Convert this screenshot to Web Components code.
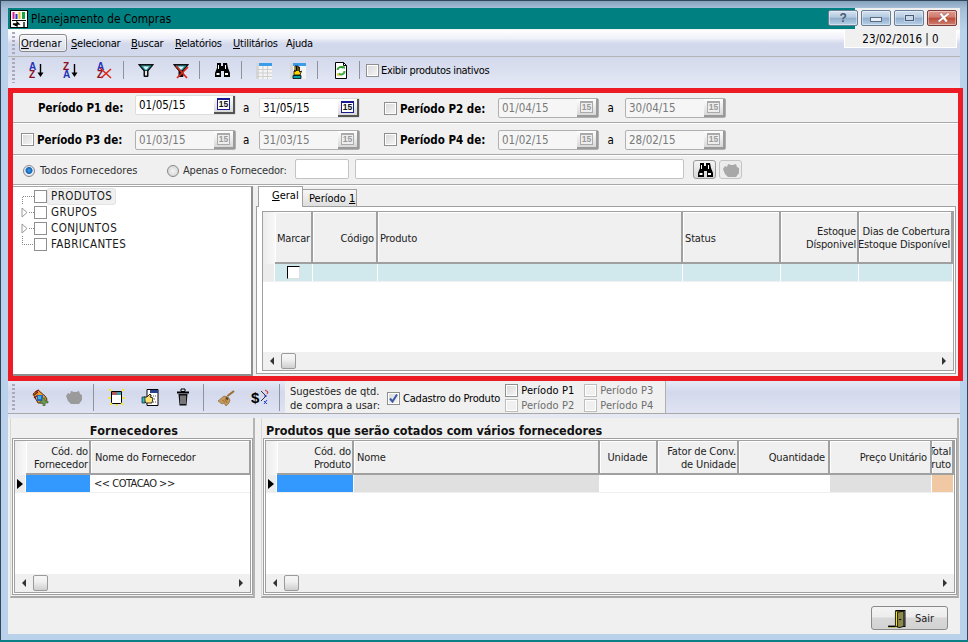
<!DOCTYPE html>
<html lang="pt"><head><meta charset="utf-8"><title>Planejamento de Compras</title>
<style>
html,body{margin:0;padding:0;width:968px;height:642px;overflow:hidden;background:#b9d1ea}
body{font:11px "DejaVu Sans Condensed","DejaVu Sans",sans-serif;letter-spacing:-.15px;color:#000}
</style></head><body>
<app-window>
  <title-bar>Planejamento de Compras</title-bar>
  <menu-bar date="23/02/2016 | 0"></menu-bar>
  <tool-bar h="31" pb="5" style="--top:#d3d9ec;--mid:#d9deef;--bot:#e6eaf6">
    <x-icon n="az" style="margin-left:13px"></x-icon><x-icon n="za" style="margin-left:16px"></x-icon><x-icon n="azx" style="margin-left:16px"></x-icon>
    <tool-sep style="margin-left:9px"></tool-sep>
    <x-icon n="filter" style="margin-left:13px"></x-icon><x-icon n="filterx" style="margin-left:17px"></x-icon>
    <tool-sep style="margin-left:9px"></tool-sep>
    <x-icon n="bin" style="margin-left:13px"></x-icon>
    <tool-sep style="margin-left:10px"></tool-sep>
    <x-icon n="grid" style="margin-left:13px"></x-icon><x-icon n="gridhand" style="margin-left:16px"></x-icon>
    <tool-sep style="margin-left:10px"></tool-sep>
    <x-icon n="refresh" style="margin-left:14px"></x-icon>
    <tool-sep style="margin-left:9px"></tool-sep>
    <check-field style="margin-left:6px;letter-spacing:-.36px;--cg:2px">Exibir produtos inativos</check-field>
  </tool-bar>
  <red-frame>
    <period-row h="30" top="5">
      <span slot="a" style="padding-left:25px;font-weight:700;font-size:11.5px;letter-spacing:0">Período P1 de:</span>
      <date-field slot="d1" value="01/05/15" style="margin-top:-3px"></date-field>
      <date-field slot="d2" value="31/05/15"></date-field>
      <check-field slot="b" strong style="margin-top:4px">Período P2 de:</check-field>
      <date-field slot="d3" value="01/04/15" disabled></date-field>
      <date-field slot="d4" value="30/04/15" disabled></date-field>
    </period-row>
    <period-row h="32" top="7">
      <check-field slot="a" strong style="margin:3px 0 0 8px">Período P3 de:</check-field>
      <date-field slot="d1" value="01/03/15" disabled></date-field>
      <date-field slot="d2" value="31/03/15" disabled></date-field>
      <check-field slot="b" strong style="margin-top:3px">Período P4 de:</check-field>
      <date-field slot="d3" value="01/02/15" disabled></date-field>
      <date-field slot="d4" value="28/02/15" disabled></date-field>
    </period-row>
    <supplier-row></supplier-row>
    <split-pane>
      <tree-view slot="left">
        <tree-item kind="first" hover>PRODUTOS</tree-item>
        <tree-item kind="node">GRUPOS</tree-item>
        <tree-item kind="node">CONJUNTOS</tree-item>
        <tree-item kind="last">FABRICANTES</tree-item>
      </tree-view>
      <tab-panel slot="right">
        <data-grid hh="51" style="--pt:2px" data-cols='[[12,"ind",""],[38,"r","Marcar"],[65,"r","Código",2],[305,"l","Produto"],[98,"l","Status"],[78,"r","Estoque|Dísponivel"],[94,"r","Dias de Cobertura|Estoque Disponível"]]' data-row="#d1e8ec" data-mark="1"></data-grid>
      </tab-panel>
    </split-pane>
  </red-frame>
  <tool-bar h="32" foot style="--top:#e6eaf6;--mid:#d3d9ec;--bot:#dfe3f2">
    <x-icon n="house" style="margin-left:16px"></x-icon><x-icon n="blob" style="margin-left:16px"></x-icon>
    <tool-sep tall style="margin-left:10px"></tool-sep>
    <x-icon n="newdoc" style="margin-left:13px"></x-icon><x-icon n="dochand" style="margin-left:16px"></x-icon><x-icon n="trash" style="margin-left:15px"></x-icon>
    <tool-sep tall style="margin-left:11px"></tool-sep>
    <x-icon n="broom" style="margin-left:13px"></x-icon><x-icon n="dollar" style="margin-left:16px"></x-icon>
    <tool-sep tall style="margin-left:10px"></tool-sep>
    <suggest-box style="margin-left:5px"></suggest-box>
  </tool-bar>
  <div style="display:flex;height:180px;gap:6px;padding:0 1px 0 2px;box-sizing:border-box">
    <group-panel w="245" caption="Fornecedores" center style="letter-spacing:.2px">
      <data-grid hh="33" style="letter-spacing:-.15px;--lp:4px" data-cols='[[11,"ind",""],[65,"r","Cód. do|Fornecedor"],[160,"l","Nome do Fornecedor"]]' data-cells='["#3399ff","#fff"]' data-cell-text="&lt;&lt; COTACAO &gt;&gt;" data-text-col="2" data-arrow="1" data-both="1"></data-grid>
    </group-panel>
    <group-panel w="698" caption="Produtos que serão cotados com vários fornecedores" style="letter-spacing:-.04px">
      <data-grid hh="33" style="letter-spacing:-.15px;--lp:3px" data-cols='[[11,"ind",""],[77,"r","Cód. do|Produto"],[246,"l","Nome"],[58,"c","Unidade",4],[81,"r","Fator de Conv.|de Unidade"],[91,"r","Quantidade",3],[102,"r","Preço Unitário",3],[22,"r","Total|Bruto"]]' data-cells='["#3399ff","#e0e0e0","#fff","#fff","#fff","#e0e0e0","#f0c8a4"]' data-arrow="1"></data-grid>
    </group-panel>
  </div>
  <foot-bar></foot-bar>
</app-window>

<script>
const svg=(w,h,body)=>`<svg xmlns="http://www.w3.org/2000/svg" width="${w}" height="${h}" viewBox="0 0 18 18" style="display:block">${body}</svg>`;
const L=`font-family="Liberation Sans" font-weight="700" font-size="10" letter-spacing="0"`;
const arrowD=`<path d="M12.500 3v9" stroke="#000" stroke-width="1.400"/><path d="M9.500 11.500h6l-3 4.500z" fill="#000"/>`;
const ICONS={
az:`<text x="1" y="8.500" ${L} fill="#2432b8">A</text><text x="1" y="17" ${L} fill="#8e1020">Z</text>${arrowD}`,
za:`<text x="1" y="8.500" ${L} fill="#8e1020">Z</text><text x="1" y="17" ${L} fill="#2432b8">A</text>${arrowD}`,
azx:`<text x="1" y="8.500" ${L} fill="#2432b8">A</text><text x="1" y="17" ${L} fill="#8e1020">Z</text><path d="M4 7l11 10M15 8L5 17" stroke="#d8281c" stroke-width="1.500"/>`,
filter:`<path d="M1.500 3.500h15l-5.500 6.500v5.500h-4V10z" fill="#111" stroke="#111"/><path d="M3.500 4.500h11l-4.500 5h-2z" fill="#2a9aa5"/><path d="M6 5.500h6l-2.500 3h-1z" fill="#dff4f6"/><path d="M8 10h2v4.500H8z" fill="#e8e8e8"/>`,
filterx:`<path d="M1.500 3.500h15l-5.500 6.500v5.500h-4V10z" fill="#111" stroke="#111"/><path d="M3.500 4.500h11l-4.500 5h-2z" fill="#2a9aa5"/><path d="M6 5.500h6l-2.500 3h-1z" fill="#dff4f6"/><path d="M4 5l11 12M16 6L5 17" stroke="#d8281c" stroke-width="1.700"/>`,
bin:`<path d="M4 2h4v3h2V2h4l1 5 2 5v4h-6v-6H8v6H2v-4l2-5z" fill="#000"/><path d="M5 4h1v4H5zM12 4h1v4h-1zM3.500 12h3v2h-3zM12 12h3v2h-3z" fill="#fff"/>`,
grid:`<path d="M1 2h16v16H1z" fill="#f4f4f4"/><path d="M1 2h16v3H1z" fill="#3c9ce8"/><path d="M1 2h3v16H1z" fill="#d6d6d6"/><path d="M1 8.500h16M1 12h16M1 15.500h16M8 5v13M12.500 5v13" stroke="#cfcfcf"/>`,
gridhand:`<path d="M1 2h16v16H1z" fill="#f4f4f4"/><path d="M1 2h16v3H1z" fill="#3c9ce8"/><path d="M1 2h3v16H1z" fill="#d6d6d6"/><path d="M5 14v-4l1-1v2-6h1.500v5-5h1.500v5-4h1.500v5l2-1-1.500 4z" fill="#ffd800" stroke="#000" stroke-width=".8"/><path d="M4 14.500h8v3H4z" fill="#00a0b0" stroke="#000" stroke-width=".8"/>`,
refresh:`<path d="M3.500 1.500h8l3 3v13h-11z" fill="#fff" stroke="#000"/><path d="M11.500 1.500v3h3" fill="none" stroke="#000"/><path d="M5.500 9a3.500 3.500 0 0 1 6-2" fill="none" stroke="#2ea02e" stroke-width="2"/><path d="M12.500 10a3.500 3.500 0 0 1-6 2.500" fill="none" stroke="#3fb03f" stroke-width="2"/><path d="M10 5l3 .5-.5 3z" fill="#2ea02e"/><path d="M8 15l-3-.5.5-3z" fill="#f0c020"/>`,
house:`<path d="M2 6l5-4 7 6 2 3-2 4-7 0z" fill="#f0a020" stroke="#5a2a10"/><path d="M4 4l4-2M3 7l4-3M3 10l4-3" stroke="#801818" stroke-width="1.200"/><path d="M6 7h6v6H6z" fill="#1c64d8"/><path d="M7 8h3v3H7z" fill="#38b8e8"/><path d="M11 10h3v3h3v2h-3v3h-2v-3h-3v-2h2z" fill="#6f9a50" stroke="#3c5c30" stroke-width=".6"/>`,
blob:`<path d="M1 8l2-3 2 1 1-3 3 1 2 0 3-1 1 3 2 1v5l-3 4H6l-3-3z" fill="#9a9a9a"/>`,
newdoc:`<path d="M4.500 3.500h10v12h-10z" fill="#fff" stroke="#000"/><path d="M5 4h5v3H5z" fill="#b05a5a"/><path d="M10 4h4v3h-4z" fill="#3c9ca8"/><path d="M2 1l2 2M17 1l-2 2M1 10h3M15 10h3M3 17l2-2M16 17l-2-2M9.500 16v2" stroke="#ffe800" stroke-width="1.500"/>`,
dochand:`<path d="M6 1.500h11v16H6z" fill="#fff" stroke="#000"/><path d="M9 2h8v3H9z" fill="#28408c"/><path d="M8 8h7M9 11h6M10 14h5" stroke="#555" stroke-dasharray="1 1"/><path d="M3 9h3l3-3 1 1-1 2 3 1-1 5H5l-1-1z" fill="#ffe070" stroke="#000" stroke-width=".8"/><path d="M1 9h3v6H1z" fill="#30b8c8" stroke="#000" stroke-width=".6"/>`,
trash:`<path d="M7 1h4v2.500H7z" fill="none" stroke="#000"/><path d="M3 3.500h12v2H3z" fill="#000"/><path d="M4.500 6h9l-1 11.500h-7z" fill="#111"/><path d="M7 7.500v8.500M9 7.500v8.500M11 7.500v8.500" stroke="#ddd"/>`,
broom:`<path d="M10.500 8L17 3" stroke="#9a6a30" stroke-width="2"/><path d="M1 13l6-5 4 1 2 3-1 3-3 3-2-3-2 1z" fill="#c89a58" stroke="#7a5a30" stroke-width=".6"/><path d="M9 9.500l2 2" stroke="#5a4020" stroke-width="2"/><path d="M5 12l3 2M8 11l2 4" stroke="#7a5a30" stroke-width=".7"/>`,
dollar:`<text x="0" y="15" font-family="Liberation Sans" font-weight="700" font-size="15" letter-spacing="0" fill="#000">$</text><path d="M10 3l5 5-5 5" fill="none" stroke="#333" stroke-width="1"/><path d="M14 2l3 2-1 2" fill="none" stroke="#d02020"/><path d="M13 8l3 0" stroke="#2a40c8"/><path d="M13 13l3 3M16 12l-3 4" stroke="#2a40c8"/>`,
door:`<path d="M1 16.500h7" stroke="#000" stroke-width="1.500"/><path d="M8 1.500h9v15h-3" fill="none" stroke="#000"/><path d="M8 2h7v14.500H8z" fill="#ffe800" stroke="#000" stroke-width=".8"/><path d="M10 3l6-1v14.500l-6 1.500z" fill="#8a8a50" stroke="#000" stroke-width=".8"/><path d="M11.500 10h2" stroke="#000"/><path d="M1 18h9" stroke="#c8c850" stroke-width="2" stroke-dasharray="1 1"/>`,
app:`<path d="M0 0h18v18H0z" fill="#000"/><path d="M1 1h16v16H1z" fill="#f8f8f8"/><path d="M2.500 2h2v7h-2z" fill="#e81c8c"/><path d="M5.500 4h2v5h-2z" fill="#1c3cc8"/><path d="M8.500 2h2v7h-2z" fill="#e8c81c"/><path d="M12 2h3v7h-3z" fill="#18a048"/><path d="M2 10.500h14" stroke="#000"/><path d="M3 14h6l-2-2v4zM14 12v5" stroke="#000" stroke-width="1.300" fill="#000"/>`
};
class Base extends HTMLElement{
  connectedCallback(){ if(this.shadowRoot)return; this.attachShadow({mode:"open"}).innerHTML=this.view(); }
  view(){return ""}
}
const def=(n,f)=>customElements.define(n,class extends Base{view(){return f(this)}});

def("x-icon",e=>`<style>:host{display:block;flex:none;width:18px;height:18px}</style>${svg(18,18,ICONS[e.getAttribute("n")])}`);
def("tool-sep",e=>`<style>:host{display:block;flex:none;width:1px;height:${e.hasAttribute("tall")?27:18}px;background:#8f939c}</style>`);

def("app-window",()=>`<style>
:host{display:block;box-sizing:border-box;width:968px;height:642px;position:relative;padding:8px 8px 8px 8px;
background:linear-gradient(#7f9db9 0,#a5bdd6 8px,#b9d1ea 30px,#b9d1ea 100%);overflow:hidden;
box-shadow:inset 0 0 0 1px #34475a}
.b{display:flex;flex-direction:column;width:952px;height:626px;background:#f0f0f0}
.t{position:absolute;left:0;right:0;bottom:0;height:2px;background:#0c7f86}
</style><div class="b"><slot></slot></div><div class="t"></div>`);

def("title-bar",()=>`<style>
:host{display:block;height:22px;position:relative;flex:none}
.s{width:847px;height:21px;background:#008080;display:flex;align-items:center;gap:3px;padding-left:2px;box-sizing:border-box;font-size:11.800px;letter-spacing:0}
.btns{position:absolute;right:3px;top:2px;display:flex;gap:3px}
.c{width:30px;height:16px;box-sizing:border-box;border:1px solid #6a7f96;border-radius:2px;background:linear-gradient(#d4e2f0 0,#b4cae0 45%,#8fadcc 50%,#b8d0e6 100%);display:flex;align-items:center;justify-content:center;box-shadow:inset 0 0 0 1px #ffffff66;font:700 12px "Liberation Sans",sans-serif;color:#4a5a70}
.x{background:linear-gradient(#e09a90 0,#d07a6c 45%,#b94a38 50%,#d08070 100%);border-color:#7a3a38;color:#fff}
i{display:block}
</style><div class="s"><span style="display:block;width:18px;height:18px">${svg(18,18,ICONS.app)}</span><span><slot></slot></span></div>
<div class="btns"><div class="c">?</div><div class="c"><i style="width:10px;height:3px;margin-top:3px;background:#e8eef6;border:1px solid #5a6a80"></i></div><div class="c"><i style="width:7px;height:4px;background:#c8d8e8;border:1.500px solid #4a5a70;outline:1px solid #e8eef666"></i></div><div class="c x"><i style="display:block;line-height:10px;font-size:15px;text-shadow:0 0 1px #5a2020">✕</i></div></div>`);

def("menu-bar",e=>{
 const items=[["O","rdenar",48],["S","elecionar",56],["B","uscar",40],["R","elatórios",54],["U","tilitários",49],["","Ajuda",40]];
 return `<style>
:host{display:flex;flex:none;height:27px;box-sizing:border-box;border-bottom:1px solid #b5b5b5;position:relative;align-items:center;padding-left:4px;letter-spacing:-.25px;
background:linear-gradient(#fff 0,#eef0f9 9px,#e4e7f4 10px,#d3d9ec 14px,#d3d9ec 100%)}
.g{width:3px;height:22px;background:repeating-linear-gradient(#aab 0 2px,transparent 2px 4px);margin-right:4px}
.m{padding:0 2px;margin-right:4px;height:18px;line-height:17px;box-sizing:border-box;border:1px solid transparent;border-radius:3px;white-space:nowrap}
.on{border-color:#8a8a8a;background:linear-gradient(#f4f5f9,#d8dbe8);box-shadow:inset 0 0 0 1px #fff8;margin-right:1px;padding:0 0 0 1px;letter-spacing:0}
u{text-decoration-thickness:1px;text-underline-offset:1px}
.d{position:absolute;right:3px;top:0;width:113px;height:18px;box-sizing:border-box;background:#f0f0f0;border:1px solid #fff;border-top:0;text-align:center;line-height:18px;font-size:11.500px;letter-spacing:0}
</style><div class="g"></div>${items.map((i,n)=>`<div class="m ${n==0?'on':''}" style="width:${i[2]}px"><u>${i[0]}</u>${i[1]}</div>`).join("")}<div class="d">${e.getAttribute("date")}</div>`});

def("tool-bar",e=>{const h=+e.getAttribute("h"),foot=e.hasAttribute("foot"),pb=e.getAttribute("pb")||0;return `<style>
:host{display:block;flex:none}
.i{display:flex;align-items:center;height:${h}px;padding:0 0 ${pb}px 4px;box-sizing:border-box;background:linear-gradient(var(--top) 0,var(--mid) 35%,var(--bot) 100%)}
.g{width:3px;height:${h-6}px;flex:none;background:repeating-linear-gradient(#aab 0 2px,transparent 2px 4px)}
.f{height:5px;box-sizing:border-box;border-top:1px solid #a8a8a8;background:#e6e9f4}
</style><div class="i"><div class="g"></div><slot></slot></div>${foot?'<div class="f"></div>':''}`});

const box=(c,d,plain)=>`<span class="cb ${d?'dis':''} ${plain?'plain':''}">${c?'<svg width="11" height="11" viewBox="0 0 11 11" style="display:block"><path d="M2 5.500l2.500 3L9 1.500" fill="none" stroke="#3c5aa8" stroke-width="2"/></svg>':''}</span>`;
const boxCss=`.cb{display:block;flex:none;width:13px;height:13px;box-sizing:border-box;border:1px solid #8e8f8f;background:linear-gradient(135deg,#d8d8d8,#f6f6f6);box-shadow:inset 0 0 0 1px #fff}
.cb.dis{border-color:#bdbdbd;background:#f0f0f0}.cb.plain{background:#fff;border-color:#8e8f8f;box-shadow:none}`;
def("check-field",e=>`<style>:host{display:flex;align-items:center;gap:var(--cg,3px);height:13px;flex:none;${e.hasAttribute("strong")?"font-weight:700;font-size:11.500px;letter-spacing:0;":""}${e.hasAttribute("dim")?"color:#6d6d6d;":""}white-space:nowrap}${boxCss}</style>${box(e.hasAttribute("checked"),e.hasAttribute("dim"))}<span><slot></slot></span>`);

def("red-frame",()=>`<style>:host{display:flex;flex-direction:column;flex:none;width:955px;height:293px;box-sizing:border-box;border:5px solid #ed1c24;background:#f0f0f0;position:relative}</style><slot></slot>`);

def("period-row",e=>`<style>:host{display:grid;flex:none;height:${e.getAttribute("h")}px;box-sizing:border-box;padding-top:${e.getAttribute("top")}px;border-bottom:1px solid #a8a8a8;box-shadow:0 1px 0 #fff;grid-template-columns:122px 101px 23px 101px 24px 114px 101px 26px 101px;align-items:start;white-space:nowrap}
.a{text-align:center;line-height:20px;padding-right:3px;font-size:11.500px}
::slotted([slot=a]),::slotted([slot=b]){margin-top:2px}
.l{line-height:20px}</style>
<div class="l"><slot name="a"></slot></div><slot name="d1"></slot><div class="a">a</div><slot name="d2"></slot><div></div><div class="l"><slot name="b"></slot></div><slot name="d3"></slot><div class="a">a</div><slot name="d4"></slot>`);

def("date-field",e=>{const d=e.hasAttribute("disabled");return `<style>
:host{display:flex;width:101px;height:20px;box-sizing:border-box;border:1px solid ${d?'#b0b0b0':'#dcdcdc'};border-radius:2px;background:${d?'#f6f6f6':'#fff'};padding-left:3px;align-items:center;justify-content:space-between;color:${d?'#7a7a7a':'#000'};font-size:11.500px;letter-spacing:0}
.c{width:21px;height:18px;box-sizing:border-box;background:linear-gradient(#fff,#d8d8d8);border-right:2px solid ${d?'#9a9a9a':'#555'};border-bottom:2px solid ${d?'#9a9a9a':'#555'};display:flex;align-items:center;justify-content:center}
.n{display:block;width:13px;height:12px;box-sizing:border-box;border:1px solid ${d?'#aaa':'#1a1a90'};border-top-width:2px;background:${d?'#eee':'#fff'};font:700 8.500px/9px "Liberation Sans",sans-serif;color:${d?'#999':'#111'};text-align:center;letter-spacing:0}
</style><span>${e.getAttribute("value")}</span><span class="c"><span class="n">15</span></span>`});

def("supplier-row",()=>`<style>
:host{display:flex;flex:none;align-items:center;height:30px;box-sizing:border-box;border-bottom:1px solid #a8a8a8;box-shadow:0 1px 0 #fff;padding:0 0 1px 10px;white-space:nowrap;letter-spacing:0}
.r{display:block;flex:none;width:12px;height:12px;box-sizing:border-box;border-radius:50%;border:1px solid #888;background:radial-gradient(circle,#f4f4f4,#cfcfcf);margin-top:3px}
.r.on{background:radial-gradient(circle at 50% 45%,#3aa0f0 0,#1464b0 3px,#eef 4px,#ddd 6px)}
.x{margin-top:3px;color:#333}
.t{display:block;height:20px;box-sizing:border-box;border:1px solid #c4c4c4;border-radius:2px;background:#fff}
.b{display:flex;align-items:center;justify-content:center;width:23px;height:19px;box-sizing:border-box;border:1px solid #9a9a9a;border-radius:3px;background:linear-gradient(#f4f4f4,#d8d8d8);margin-top:1px}
</style><span class="r on"></span><span class="x" style="margin-left:5px;width:127px">Todos Fornecedores</span><span class="r"></span><span class="x" style="margin-left:4px;width:112px;letter-spacing:-.2px">Apenas o Fornecedor:</span>
<span class="t" style="width:54px;margin-right:6px"></span><span class="t" style="width:329px;margin-right:9px"></span>
<span class="b">${svg(18,18,ICONS.bin)}</span><span class="b" style="margin-left:3px;border-color:#c4c4c4;background:#ececec">${svg(18,18,ICONS.blob.replace('#9a9a9a','#a8a8a8'))}</span>`);

def("split-pane",()=>`<style>:host{display:flex;flex:1;min-height:0}</style><slot name="left"></slot><slot name="right"></slot>`);
def("tree-view",()=>`<style>:host{display:block;box-sizing:border-box;width:240px;height:190px;margin-top:1px;background:#fff;border-top:1px solid #a8a8a8;border-right:2px solid #8f8f8f;border-bottom:2px solid #8f8f8f;padding:1px 0 0 7px}</style><slot></slot>`);
def("tree-item",e=>{const k=e.getAttribute("kind");
 const dots=`stroke="#888" stroke-dasharray="1 1" fill="none"`;
 const g={first:`<path d="M2.500 16V8.500H14" ${dots}/>`,node:`<path d="M2 4l5 4.500-5 4.500z" fill="#fff" stroke="#999"/><path d="M9 8.500h5" ${dots}/>`,last:`<path d="M2.500 0v8.500H14" ${dots}/>`}[k];
 return `<style>:host{display:flex;align-items:center;height:16px;color:#1a1a1a;font-size:11.500px;letter-spacing:.4px}${boxCss}
 .t{margin-left:1px;padding:0 3px;height:15px;line-height:15px;border-radius:2px}.h{background:#f0f0f0;box-shadow:0 0 0 1px #e4e4e4}</style><svg width="14" height="16" viewBox="0 0 14 16" style="display:block;flex:none">${g}</svg><span class="cb plain"></span><span class="t ${e.hasAttribute('hover')?'h':''}"><slot></slot></span>`});

def("tab-panel",()=>`<style>
:host{display:flex;flex-direction:column;box-sizing:border-box;width:705px;height:191px;padding:1px 2px 2px 3px}
.tabs{display:flex;height:20px;padding-left:2px;flex:none;position:relative;z-index:1}
.tb{box-sizing:border-box;border:1px solid #a0a0a0}
.g{width:45px;height:21px;background:#fff;border-bottom:0;line-height:17px;padding-left:13px;letter-spacing:0}
.p{width:54px;height:18px;margin-top:3px;background:linear-gradient(#f6f6f6,#dedede);border-left:0;line-height:17px;padding-left:6px;letter-spacing:0}
.f{flex:1;min-height:0;box-sizing:border-box;border:1px solid #a0a0a0;background:#fff;padding:4px 1px 2px 5px;display:flex}
u{text-decoration-thickness:1px;text-underline-offset:1px}
</style><div class="tabs"><div class="tb g"><u>G</u>eral</div><div class="tb p">Período <u>1</u></div></div><div class="f"><slot></slot></div>`);

def("h-scroll",()=>`<style>
:host{display:flex;flex:none;align-items:center;height:18px;background:#f0f0f0;position:relative;justify-content:space-between;padding:0 7px}
.a{width:0;height:0;border:4px solid transparent}
.l{border-right:4px solid #333;border-left:0}.r{border-left:4px solid #333;border-right:0}
.th{position:absolute;left:18px;top:1px;width:15px;height:16px;box-sizing:border-box;border:1px solid #9a9a9a;border-radius:2px;background:linear-gradient(#f6f6f6,#f0f0f0 40%,#cfcfcf)}
</style><span class="a l"></span><span class="th"></span><span class="a r"></span>`);

def("data-grid",e=>{
 const cols=JSON.parse(e.dataset.cols),hh=+e.getAttribute("hh");
 const tpl=cols.map(c=>c[0]+"px").join(" ");
 const head=cols.map(c=>{
   if(c[1]==="ind")return `<div class="hd ind"></div>`;
   const lines=c[2].split("|").map(t=>`<span>${t}</span>`).join("");
   return `<div class="hd ${c[1]}"${c[3]?` style="padding-right:${c[3]}px"`:''}>${lines}</div>`}).join("");
 let cells;
 if(e.dataset.cells){const colors=JSON.parse(e.dataset.cells);
   cells=colors.map((col,i)=>`<div class="ce" style="background:${col}">${e.dataset.textCol==String(i+1)?`<span class="tx">${e.dataset.cellText}</span>`:''}</div>`).join("");
 } else {cells=cols.slice(1).map((c,i)=>`<div class="ce" style="background:${e.dataset.row}">${i==0?'<span class="mk"></span>':''}</div>`).join("")}
 return `<style>
:host{display:flex;flex-direction:column;flex:1;min-width:0;box-sizing:border-box;border:1px solid #a0a0a0;background:#fff;padding:0;overflow:hidden}
.h,.w{display:grid;grid-template-columns:${tpl};flex:none}
.h{height:${hh+1}px;background:#f0f0f0}
.hd{box-sizing:border-box;display:flex;flex-direction:column;justify-content:center;overflow:hidden;white-space:nowrap;border-right:2px solid #a0a0a0;border-bottom:2px solid #a0a0a0;box-shadow:inset 1px 1px 0 #fff;padding:var(--pt,1px) 1px 0 var(--lp,2px);line-height:13px;color:#222;min-width:0;align-items:flex-start}
.hd.r{align-items:flex-end}.hd.c{align-items:center}
.ind{border:0;background:linear-gradient(90deg,#ececec,#f8f8f8);box-shadow:none}
.w{height:18px;border-bottom:1px solid #f0f0f0;box-sizing:border-box}
.w>div{box-sizing:border-box;border-right:1px solid #fff;overflow:hidden;display:flex;align-items:center;min-width:0}
.ig{background:#ececec;justify-content:center}
.tri{width:0;height:0;border:5px solid transparent;border-left:6px solid #000;border-right:0}
.tx{padding-left:3px;color:#222;letter-spacing:-.5px}
.mk{display:block;width:13px;height:13px;box-sizing:border-box;margin:0 0 0 12px;background:#fff;border:1px solid #e0e0e0;border-top:1px solid #000;border-left:1px solid #000}
.sp{flex:1}
</style><div class="h">${head}</div><div class="w"><div class="ig">${e.dataset.arrow?'<span class="tri"></span>':''}</div>${cells}</div><div class="sp"></div><h-scroll></h-scroll>`});

def("suggest-box",()=>`<style>
:host{display:flex;flex:none;align-items:center;width:381px;height:32px;box-sizing:border-box;background:#f0f0f0;border-right:1px solid #b0b0b0;padding:3px 0 0 5px;line-height:14px;white-space:nowrap;letter-spacing:0}
.g{display:grid;grid-template-columns:79px 80px;row-gap:2px;margin:-1px 0 0 5px;letter-spacing:.1px}
</style><div style="width:97px;color:#222">Sugestões de qtd.<br>de compra a usar:</div><check-field checked style="letter-spacing:-.2px">Cadastro do Produto</check-field>
<div class="g"><check-field>Período P1</check-field><check-field dim>Período P3</check-field><check-field dim>Período P2</check-field><check-field dim>Período P4</check-field></div>`);

def("group-panel",e=>`<style>
:host{display:flex;flex-direction:column;flex:none;box-sizing:border-box;width:${e.getAttribute("w")}px;height:180px;padding-top:3px;border-bottom:2px solid #a8a8a8;border-right:2px solid #b4b4b4;border-left:1px solid #d8d8d8}
.c{height:17px;flex:none;font-weight:700;font-size:12.500px;line-height:20px;color:#111;padding-left:4px;text-align:${e.hasAttribute("center")?"center":"left"};white-space:nowrap}
.f{flex:1;min-height:0;margin:0 0 1px 1px;display:flex;border:1px solid #a0a0a0;padding:1px;background:#fff}
</style><div class="c">${e.getAttribute("caption")}</div><div class="f"><slot></slot></div>`);

def("foot-bar",()=>`<style>
:host{display:flex;flex:1;justify-content:flex-end;align-items:flex-start;padding:8px 12px 0 0;letter-spacing:0}
.b{display:flex;align-items:center;width:77px;height:24px;box-sizing:border-box;border:1px solid #8a8a8a;border-radius:3px;background:linear-gradient(#f4f4f4,#ececec 45%,#d8d8d8 50%,#d2d2d2);padding-left:15px;gap:9px;color:#222}
</style><div class="b">${svg(19,19,ICONS.door)}<span>Sair</span></div>`);
</script>
</body></html>
